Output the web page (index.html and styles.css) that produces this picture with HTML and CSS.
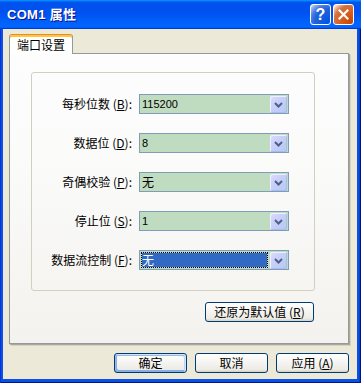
FILE: index.html
```html
<!DOCTYPE html>
<html lang="zh-CN">
<head>
<meta charset="utf-8">
<title>COM1 属性</title>
<link rel="stylesheet" href="styles.css">
</head>
<body>
<div class="window">
  <div class="titlebar">
    <span class="title">COM1 属性</span>
    <div class="controls">
      <button class="tbtn help" aria-label="帮助">?</button>
      <button class="tbtn close" aria-label="关闭">
        <svg width="11" height="11" viewBox="0 0 11 11"><path d="M1.5 1.5 L9.5 9.5 M9.5 1.5 L1.5 9.5" stroke="#fff" stroke-width="2.2" stroke-linecap="square" fill="none"/></svg>
      </button>
    </div>
  </div>
  <div class="frame">
    <div class="client">
      <div class="tabs"><div class="tab">端口设置</div></div>
      <div class="panel">
        <div class="group">
          <div class="label">每秒位数 (<u>B</u>):</div>
          <div class="combo"><span class="value">115200</span><span class="drop"><svg width="9" height="6" viewBox="0 0 9 6"><path d="M1 1 L4.5 4.5 L8 1" stroke="#4D6185" stroke-width="2" fill="none"/></svg></span></div>

          <div class="label">数据位 (<u>D</u>):</div>
          <div class="combo"><span class="value">8</span><span class="drop"><svg width="9" height="6" viewBox="0 0 9 6"><path d="M1 1 L4.5 4.5 L8 1" stroke="#4D6185" stroke-width="2" fill="none"/></svg></span></div>

          <div class="label">奇偶校验 (<u>P</u>):</div>
          <div class="combo"><span class="value cjk">无</span><span class="drop"><svg width="9" height="6" viewBox="0 0 9 6"><path d="M1 1 L4.5 4.5 L8 1" stroke="#4D6185" stroke-width="2" fill="none"/></svg></span></div>

          <div class="label">停止位 (<u>S</u>):</div>
          <div class="combo"><span class="value">1</span><span class="drop"><svg width="9" height="6" viewBox="0 0 9 6"><path d="M1 1 L4.5 4.5 L8 1" stroke="#4D6185" stroke-width="2" fill="none"/></svg></span></div>

          <div class="label">数据流控制 (<u>F</u>):</div>
          <div class="combo focus"><span class="value cjk sel">无</span><span class="drop"><svg width="9" height="6" viewBox="0 0 9 6"><path d="M1 1 L4.5 4.5 L8 1" stroke="#4D6185" stroke-width="2" fill="none"/></svg></span></div>
        </div>
        <div class="restore-row"><button class="btn restore">还原为默认值 (<u>R</u>)</button></div>
      </div>
      <div class="actions">
        <button class="btn default">确定</button>
        <button class="btn">取消</button>
        <button class="btn">应用 (<u>A</u>)</button>
      </div>
    </div>
  </div>
</div>
</body>
</html>
```

FILE: styles.css
```css
* { box-sizing: border-box; }
html, body { margin: 0; padding: 0; }
body {
  width: 361px;
  height: 383px;
  overflow: hidden;
  font-family: "Noto Sans CJK SC", "Liberation Sans", sans-serif;
  font-size: 12px;
  color: #000;
}
.window {
  width: 361px;
  height: 383px;
  display: flex;
  flex-direction: column;
}
.titlebar {
  height: 29px;
  flex: none;
  display: flex;
  align-items: center;
  justify-content: space-between;
  padding: 0 7px 0 7px;
  background: linear-gradient(180deg, #0997ff, #0053ee 8%, #0050ee 40%, #0066ff 88%, #0066ff 93%, #005bff 95%, #003dd7 96%, #003dd7);
}
.title {
  color: #fff;
  font-family: "Liberation Sans", "Noto Sans CJK SC", sans-serif;
  font-weight: bold;
  font-size: 13px;
  letter-spacing: 0.3px;
  text-shadow: 1px 1px #0f1089;
  line-height: 16px;
}
.controls { display: flex; gap: 2px; }
.tbtn {
  width: 21px;
  height: 21px;
  padding: 0;
  border: 1px solid #fff;
  border-radius: 3px;
  display: flex;
  align-items: center;
  justify-content: center;
  color: #fff;
}
.help {
  background: radial-gradient(circle at 90% 90%, #0054e9 0, #2263d5 55%, #4479e4 70%, #a3bbec 90%, #fff 100%);
  font-family: "Liberation Sans", sans-serif;
  font-weight: bold;
  font-size: 16px;
  line-height: 19px;
}
.close {
  background: radial-gradient(circle at 90% 90%, #cc4600 0, #dc6527 55%, #cd7546 70%, #ffccb2 90%, #fff 100%);
}
.frame {
  flex: 1;
  display: flex;
  padding: 0 4px 4px 3px;
  background: #0a52e6;
  box-shadow: inset 1px 0 #0831d9, inset -1px 0 #00138c, inset 0 -1px #00138c, inset -2px 0 #0042d0;
}
.client {
  flex: 1;
  display: flex;
  flex-direction: column;
  background: #ece9d8;
  padding: 5px 8px 6px 6px;
}
.tabs {
  display: flex;
  height: 20px;
  margin-bottom: -1px;
  position: relative;
  z-index: 1;
}
.tab {
  width: 64px;
  height: 20px;
  background: #fff;
  border: 1px solid #919b9c;
  border-bottom: none;
  border-top: 1px solid #e68b2c;
  border-radius: 3px 3px 0 0;
  box-shadow: inset 0 2px #ffc73c;
  text-align: center;
  padding-top: 1px;
  line-height: 17px;
}
.panel {
  height: 291px;
  flex: none;
  border: 1px solid #919b9c;
  background: linear-gradient(180deg, #fdfdfe 0, #fbfbfa 35%, #f3f2ee 100%);
  box-shadow: 1px 1px 0 #aca899, 2px 2px 0 #d6d3c6;
  padding: 18px 0 0 21px;
  display: flex;
  flex-direction: column;
}
.group {
  width: 284px;
  height: 219px;
  border: 1px solid #d0d0bf;
  border-radius: 3px;
  padding-top: 21px;
  display: grid;
  grid-template-columns: 100px 150px;
  column-gap: 7px;
  row-gap: 19px;
  grid-auto-rows: 20px;
  align-content: start;
}
.label {
  text-align: right;
  line-height: 20px;
  white-space: nowrap;
  font-size: 12px;
}
.label u, .btn u { text-underline-offset: 1px; }
.combo {
  display: flex;
  height: 20px;
  border: 1px solid #7f9db9;
  background: #c0dcc0;
}
.value {
  flex: 1;
  padding-left: 2px;
  line-height: 18px;
  font-family: "Liberation Sans", "Noto Sans CJK SC", sans-serif;
  font-size: 11px;
}
.value.cjk {
  font-family: "Noto Sans CJK SC", sans-serif;
  font-size: 12px;
}
.value.sel {
  margin: 1px;
  padding-left: 0;
  line-height: 14px;
  border: 1px dotted #000;
  background: #316ac5;
  background-clip: padding-box;
  color: #fff;
}
.drop {
  width: 17px;
  margin: 1px 1px 0 0;
  border-radius: 2px;
  background: linear-gradient(135deg, #dcdcfc 0, #c8cefa 45%, #b4c8f4 100%);
  box-shadow: inset 1px 1px #eef0ff, inset -1px -1px #a8bde9;
  display: flex;
  align-items: center;
  justify-content: center;
}
.combo.focus .drop { margin-left: 1px; }
.restore-row {
  width: 284px;
  margin-top: 11px;
  display: flex;
  justify-content: flex-end;
  padding-right: 1px;
}
.btn {
  height: 20px;
  padding: 0;
  border: 1px solid #003c74;
  border-radius: 3px;
  background: linear-gradient(180deg, #fff, #ecebe6 86%, #d6d0c5);
  font-family: "Noto Sans CJK SC", "Liberation Sans", sans-serif;
  font-size: 12px;
  line-height: 18px;
  color: #000;
}
.restore { width: 109px; }
.actions {
  display: flex;
  justify-content: flex-end;
  gap: 8px;
  margin-top: 9px;
}
.actions .btn { width: 73px; }
.btn.default {
  box-shadow: inset -1px 1px #cee7ff, inset 1px 2px #98b8ea, inset -2px 2px #bcd4f6, inset 1px -1px #89ade4, inset 2px -2px #89ade4;
}
```
